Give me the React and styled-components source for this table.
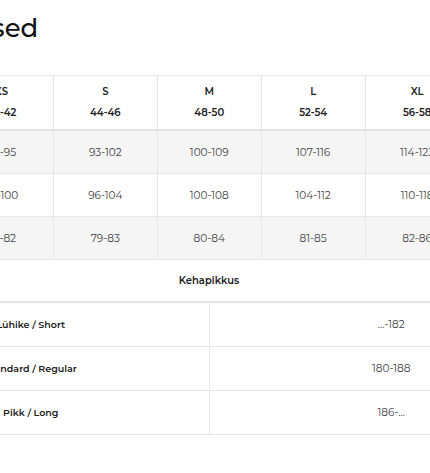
import styled, { createGlobalStyle } from "styled-components"

const GlobalStyle = createGlobalStyle`
    html, body {
        margin: 0;
        padding: 0;
        background: #fff;
        overflow: hidden;
    }
    body {
        font-family: "Montserrat", "Inter", "Open Sans", sans-serif;
        color: #222;
    }
`

const sizes = [
    { name: "XS", range: "40-42" },
    { name: "S", range: "44-46" },
    { name: "M", range: "48-50" },
    { name: "L", range: "52-54" },
    { name: "XL", range: "56-58" },
    { name: "XXL", range: "60-62" },
]

const measures = [
    { label: "Rinnaümbermõõt", values: ["86-95", "93-102", "100-109", "107-116", "114-123", "121-130"] },
    { label: "Vööümbermõõt", values: ["92-100", "96-104", "100-108", "104-112", "110-118", "116-124"] },
    { label: "Varrukapikkus", values: ["78-82", "79-83", "80-84", "81-85", "82-86", "83-87"] },
]

const heights = [
    { label: "Lühike / Short", value: "...-182" },
    { label: "Standard / Regular", value: "180-188" },
    { label: "Pikk / Long", value: "186-..." },
]

const App = () => {
    return <Wrapper>
        <GlobalStyle/>
        <Title>Suurused</Title>

        <SizeTable>
            <thead>
                <tr>
                    <HeadCell>Suurus</HeadCell>
                    {sizes.map(size=>{
                        return <HeadCell key={size.name}>
                            <span>{size.name}</span>
                            <span>{size.range}</span>
                        </HeadCell>
                    })}
                </tr>
            </thead>
            <tbody>
                {measures.map((row, i)=>{
                    return <Row key={row.label} $shaded={i % 2 === 0}>
                        <Cell>{row.label}</Cell>
                        {row.values.map((v, j)=><Cell key={j}>{v}</Cell>)}
                    </Row>
                })}
            </tbody>
        </SizeTable>

        <LengthTable>
            <thead>
                <tr>
                    <LengthHead colSpan={2}>Kehapikkus</LengthHead>
                </tr>
            </thead>
            <tbody>
                {heights.map(h=>{
                    return <tr key={h.label}>
                        <LengthLabel>{h.label}</LengthLabel>
                        <LengthValue>{h.value}</LengthValue>
                    </tr>
                })}
            </tbody>
        </LengthTable>
    </Wrapper>
}

const Wrapper = styled.div`
    width: 728px;
    margin-left: -155px;
`

const Title = styled.h1`
    margin: 0;
    padding: 10px 0 0 67px;
    height: 75px;
    box-sizing: border-box;
    font-size: 26px;
    line-height: 36px;
    font-weight: 500;
    color: #111;
`

const SizeTable = styled.table`
    width: 728px;
    table-layout: fixed;
    border-collapse: collapse;
    border-top: 1px solid #e6e6e6;
`

const HeadCell = styled.th`
    height: 53px;
    padding: 0;
    border-left: 1px solid #e6e6e6;
    border-bottom: 2px solid #e4e4e4;
    font-size: 10px;
    font-weight: 600;
    color: #222;
    text-align: center;
    vertical-align: middle;

    span {
        display: block;
        line-height: 14px;
    }
    span + span {
        margin-top: 7px;
    }
`

const Row = styled.tr`
    background: ${props => props.$shaded ? "#f5f5f5" : "#fff"};
`

const Cell = styled.td`
    height: 42px;
    padding: 0;
    border-left: 1px solid #e6e6e6;
    border-bottom: 1px solid #e6e6e6;
    font-size: 10.5px;
    color: #444;
    text-align: center;
`

const LengthTable = styled.table`
    width: 728px;
    table-layout: fixed;
    border-collapse: collapse;
`

const LengthHead = styled.th`
    height: 41px;
    padding: 0;
    border-bottom: 2px solid #e4e4e4;
    font-size: 10px;
    font-weight: 600;
    color: #222;
    text-align: center;
`

const LengthLabel = styled.td`
    height: 43px;
    padding: 0 0 0 8px;
    border-right: 1px solid #e6e6e6;
    border-bottom: 1px solid #e6e6e6;
    font-size: 9.5px;
    font-weight: 600;
    color: #222;
    text-align: center;
`

const LengthValue = styled.td`
    height: 43px;
    padding: 0;
    border-bottom: 1px solid #e6e6e6;
    font-size: 10.5px;
    color: #444;
    text-align: center;
`

export default App
